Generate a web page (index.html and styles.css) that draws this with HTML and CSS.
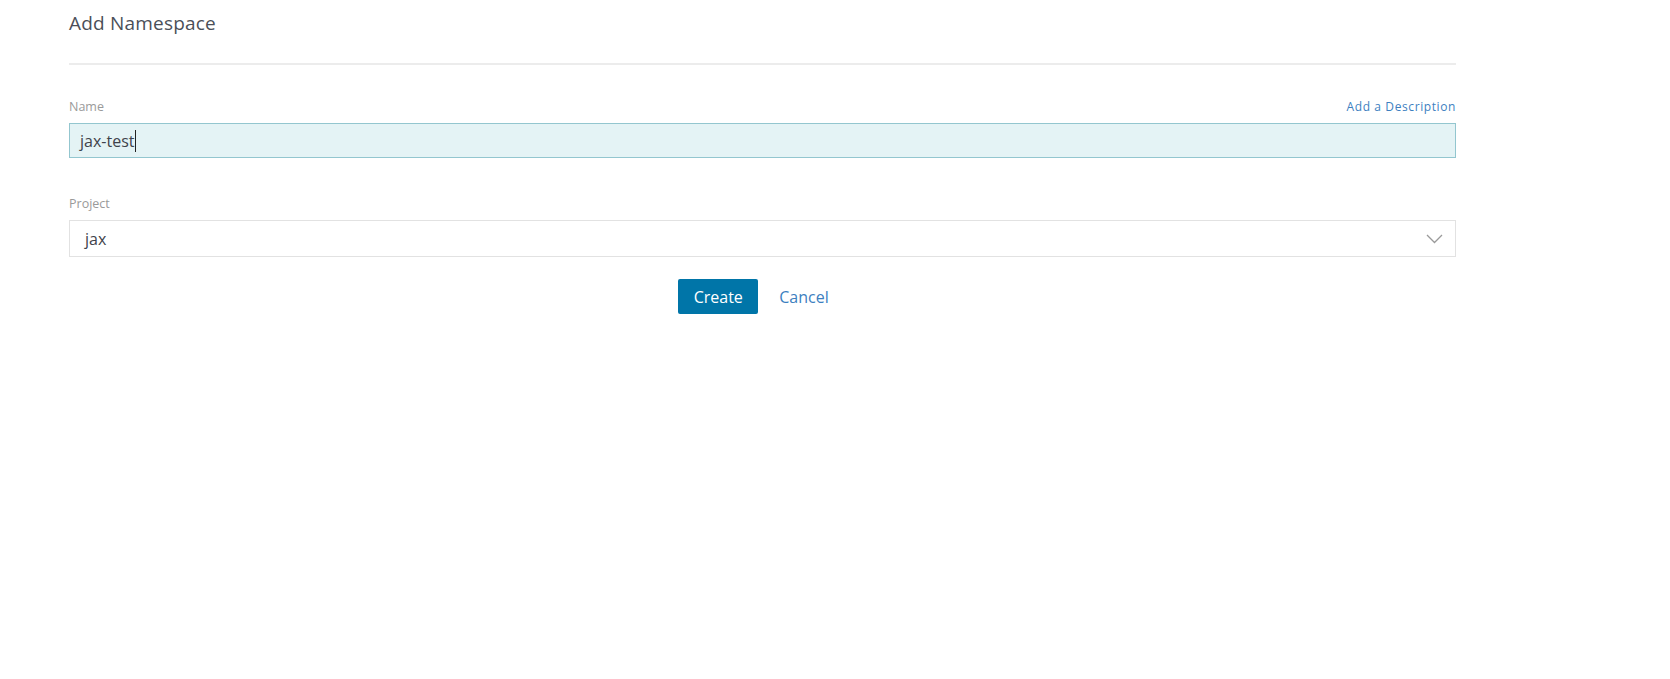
FILE: index.html
```html
<!DOCTYPE html>
<html>
<head>
<meta charset="utf-8">
<link rel="stylesheet" href="styles.css">
</head>
<body>
<main class="page">
  <header class="header">
    <h1 class="title">Add Namespace</h1>
  </header>
  <section class="field">
    <div class="label-row">
      <label class="label">Name</label>
      <a class="link-small">Add a Description</a>
    </div>
    <div class="input focused"><span>jax-test</span><span class="caret"></span></div>
  </section>
  <section class="field project">
    <div class="label-row">
      <label class="label">Project</label>
    </div>
    <div class="select">
      <span>jax</span>
      <svg class="chev" width="17" height="10" viewBox="0 0 17 10"><path d="M1 1 L8.5 8.5 L16 1" fill="none" stroke="#9a9a9a" stroke-width="1.3"/></svg>
    </div>
  </section>
  <div class="actions">
    <button class="btn-primary">Create</button>
    <a class="btn-link">Cancel</a>
  </div>
</main>
</body>
</html>
```
FILE: styles.css
```css
html, body { margin: 0; padding: 0; background: #fff; }
body { font-family: "Open Sans", "Noto Sans", sans-serif; color: #4a4d55; }
.page { width: 1387px; margin-left: 69px; }
.header { border-bottom: 2px solid #ececec; height: 65px; box-sizing: border-box; padding-top: 10px; }
.title { margin: 0; font-weight: 400; font-size: 19px; line-height: 26px; color: #4b4f58; letter-spacing: 0.2px; }
.field { margin-top: 31px; }
.label-row { display: flex; justify-content: space-between; align-items: flex-end; height: 20px; margin-bottom: 7px; }
.label { font-size: 12.5px; color: #9a9a9a; line-height: 18px; }
.link-small { font-size: 12px; color: #3d7fbf; letter-spacing: 0.6px; line-height: 18px; }
.input { height: 35px; box-sizing: border-box; border: 1px solid #93c6cf; background: #e4f3f5; display: flex; align-items: center; padding-left: 10px; font-size: 16px; color: #3f434b; }
.caret { display: inline-block; width: 1px; height: 22px; background: #222; margin-left: 1px; }
.project { margin-top: 35px; }
.select { height: 37px; box-sizing: border-box; border: 1px solid #e2e2e2; display: flex; align-items: center; justify-content: space-between; padding: 0 12px 0 15px; font-size: 16px; color: #3f434b; }
.actions { display: flex; justify-content: center; align-items: center; gap: 21px; margin-top: 22px; padding-right: 18px; }
.btn-primary { width: 80px; height: 35px; background: #0075a8; color: #fff; border: 0; border-radius: 2px; font-family: inherit; font-size: 16px; padding: 0; }
.btn-link { color: #3d7fbf; font-size: 16px; }
```
